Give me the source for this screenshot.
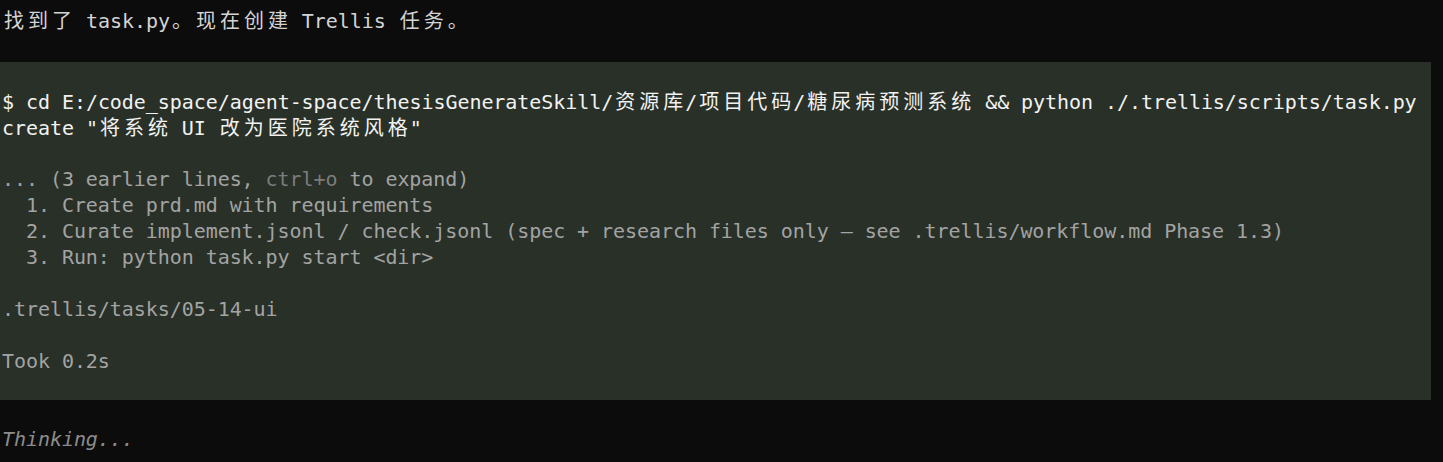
import React from "react";

const CJK = /[\u3000-\u303f\u4e00-\u9fff\uff00-\uffef]/;

// terminal cells: CJK glyphs take two columns
const Cells = ({ text }) => (
  <>
    {Array.from(text).map((ch, i) =>
      CJK.test(ch) ? (
        <span key={i} className="inline-block w-[24px] text-center" style={{ fontFamily: '"Noto Sans CJK SC", sans-serif' }}>
          {ch}
        </span>
      ) : (
        <React.Fragment key={i}>{ch}</React.Fragment>
      )
    )}
  </>
);

const Line = ({ children, className = "" }) => (
  <div className={`h-[26px] leading-[26px] whitespace-pre ${className}`}>{children || " "}</div>
);

export default function App() {
  return (
    <div
      className="min-h-screen w-[1443px] h-[462px] overflow-hidden bg-[#0c0c0c] text-[20px] tracking-[-0.06px] pl-[2px]"
      style={{ fontFamily: '"DejaVu Sans Mono", "Liberation Mono", "Noto Sans CJK SC", monospace' }}
    >
      <Line className="mt-[7px] text-[#d4d4d4]">
        <Cells text="找到了 task.py。现在创建 Trellis 任务。" />
      </Line>

      <div className="mt-[29px] -ml-[2px] pl-[2px] w-[1431px] bg-[#283028]">
        <Line />
        <Line className="text-[#f2f2f2]">
          <Cells text="$ cd E:/code_space/agent-space/thesisGenerateSkill/资源库/项目代码/糖尿病预测系统 && python ./.trellis/scripts/task.py" />
        </Line>
        <Line className="text-[#f2f2f2]">
          <Cells text={'create "将系统 UI 改为医院系统风格"'} />
        </Line>
        <Line />
        <Line className="text-[#a3a3a3]">
          {"... (3 earlier lines, "}
          <span className="text-[#7c7c7c]">ctrl+o</span>
          {" to expand)"}
        </Line>
        <Line className="text-[#a3a3a3]">{"  1. Create prd.md with requirements"}</Line>
        <Line className="text-[#a3a3a3]">
          {"  2. Curate implement.jsonl / check.jsonl (spec + research files only — see .trellis/workflow.md Phase 1.3)"}
        </Line>
        <Line className="text-[#a3a3a3]">{"  3. Run: python task.py start <dir>"}</Line>
        <Line />
        <Line className="text-[#a3a3a3]">.trellis/tasks/05-14-ui</Line>
        <Line />
        <Line className="text-[#a3a3a3]">Took 0.2s</Line>
        <Line />
      </div>

      <Line />
      <Line className="italic text-[#8c8c8c]">Thinking...</Line>
    </div>
  );
}
